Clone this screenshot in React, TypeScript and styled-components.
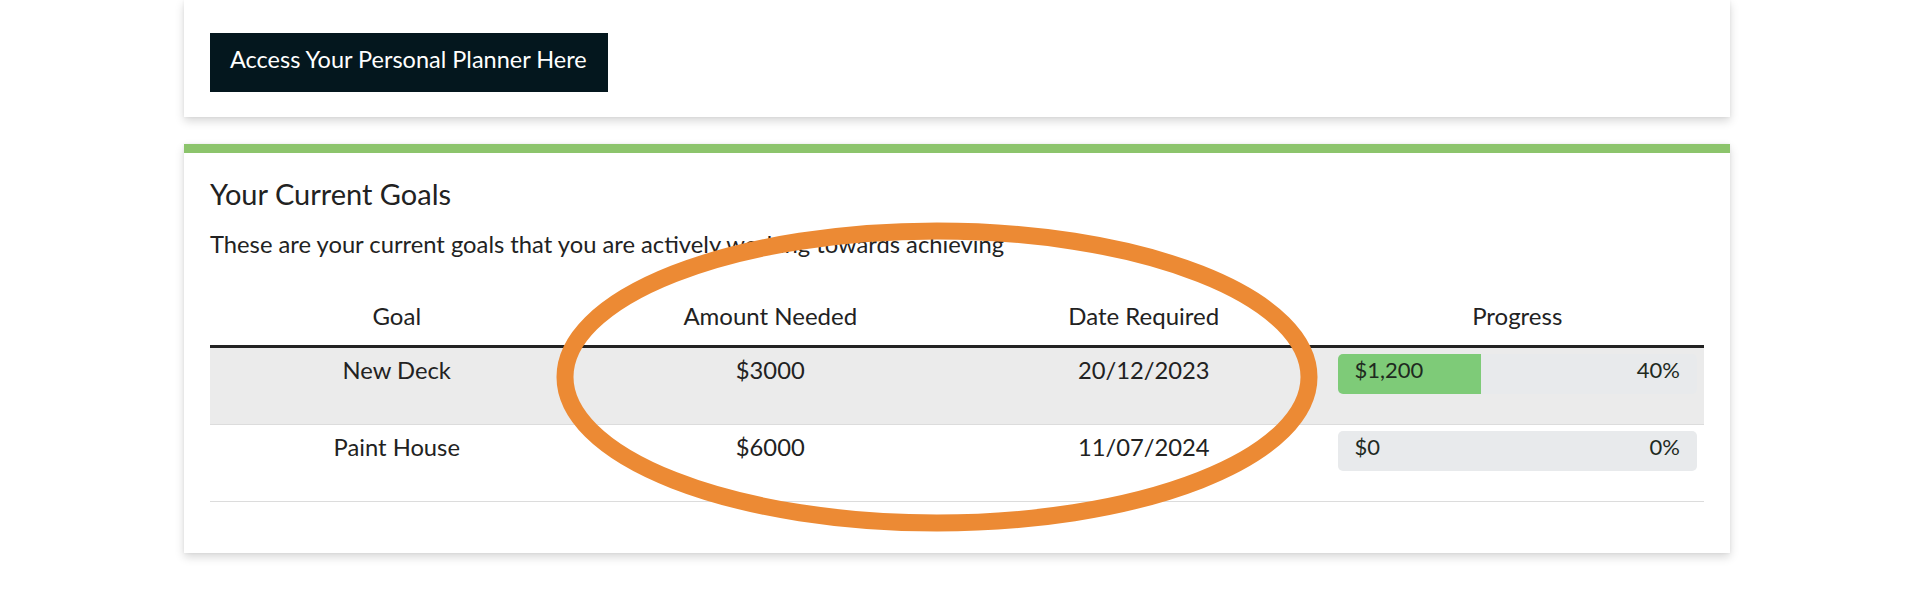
import React from 'react'
import styled, { createGlobalStyle } from 'styled-components'

interface Goal {
  name: string
  amount: string
  date: string
  saved: string
  percent: number
}

const goals: Goal[] = [
  { name: 'New Deck', amount: '$3000', date: '20/12/2023', saved: '$1,200', percent: 40 },
  { name: 'Paint House', amount: '$6000', date: '11/07/2024', saved: '$0', percent: 0 },
]

const GlobalStyle = createGlobalStyle`
  html, body {
    margin: 0;
    padding: 0;
    background: #ffffff;
    font-family: Lato, "Open Sans", "Liberation Sans", sans-serif;
    color: #222;
  }
`

const Page = styled.div`
  position: relative;
  width: 1928px;
  height: 610px;
  overflow: hidden;
`

const Column = styled.div`
  width: 1546px;
  margin-left: 184px;
  display: flex;
  flex-direction: column;
  gap: 27px;
`

const Card = styled.section<{ accent?: string }>`
  background: #fff;
  border-top: ${({ accent }) => (accent ? `9px solid ${accent}` : 'none')};
  box-shadow: 0 4px 9px rgba(0, 0, 0, 0.16), 0 0 3px rgba(0, 0, 0, 0.06);
`

const PlannerCard = styled(Card)`
  padding: 33px 26px 25px;
`

const GoalsCard = styled(Card)`
  padding: 23px 26px 51px;
`

const PlannerButton = styled.button`
  display: inline-block;
  border: none;
  border-radius: 0;
  background: #04171e;
  color: #fff;
  font-family: inherit;
  font-size: 23.5px;
  line-height: 26px;
  padding: 13px 21px 20px 20px;
  cursor: pointer;
`

const Title = styled.h2`
  margin: 0 0 15px;
  font-size: 29px;
  line-height: 35px;
  font-weight: 400;
`

const Lead = styled.p`
  margin: 0 0 25px;
  font-size: 23.75px;
  line-height: 36px;
`

const Table = styled.table`
  width: 100%;
  table-layout: fixed;
  border-collapse: collapse;
  font-size: 24px;
`

const Th = styled.th`
  font-weight: 400;
  line-height: 36px;
  padding: 11px 7px;
  text-align: center;
  border-bottom: 3px solid #222;
`

const Row = styled.tr<{ shaded: boolean }>`
  background: ${({ shaded }) => (shaded ? '#ebebeb' : '#fff')};
  border-bottom: 1px solid #dcdcdc;
`

const Td = styled.td`
  vertical-align: top;
  text-align: center;
  font-size: 23.75px;
  line-height: 32px;
  padding: 6px 7px 30px;
`

const Bar = styled.div`
  position: relative;
  height: 40px;
  border-radius: 5px;
  background: #e8eaec;
  overflow: hidden;
`

const Fill = styled.div`
  height: 100%;
  background: #7ecb78;
`

const BarLabels = styled.div`
  position: absolute;
  inset: 0;
  display: flex;
  justify-content: space-between;
  padding: 0 17px;
  font-size: 22px;
  line-height: 32px;
  color: #1f2a1f;
`

const Annotation = styled.svg`
  position: absolute;
  left: 0;
  top: 0;
  pointer-events: none;
`

const ProgressBar: React.FC<{ saved: string; percent: number }> = ({ saved, percent }) => (
  <Bar>
    <Fill style={{ width: `${percent}%` }} />
    <BarLabels>
      <span>{saved}</span>
      <span>{percent}%</span>
    </BarLabels>
  </Bar>
)

export default function App() {
  return (
    <Page>
      <GlobalStyle />
      <Column>
        <PlannerCard>
          <PlannerButton>Access Your Personal Planner Here</PlannerButton>
        </PlannerCard>
        <GoalsCard accent="#8cc46c">
          <Title>Your Current Goals</Title>
          <Lead>These are your current goals that you are actively working towards achieving</Lead>
          <Table>
            <thead>
              <tr>
                <Th>Goal</Th>
                <Th>Amount Needed</Th>
                <Th>Date Required</Th>
                <Th>Progress</Th>
              </tr>
            </thead>
            <tbody>
              {goals.map((g, i) => (
                <Row key={g.name} shaded={i % 2 === 0}>
                  <Td>{g.name}</Td>
                  <Td>{g.amount}</Td>
                  <Td>{g.date}</Td>
                  <Td>
                    <ProgressBar saved={g.saved} percent={g.percent} />
                  </Td>
                </Row>
              ))}
            </tbody>
          </Table>
        </GoalsCard>
      </Column>
      {/* hand-drawn highlight over the amount / date columns */}
      <Annotation width="1928" height="610" viewBox="0 0 1928 610">
        <ellipse cx="937" cy="377" rx="372" ry="146" fill="none" stroke="#ec8a34" strokeWidth="17" />
      </Annotation>
    </Page>
  )
}
